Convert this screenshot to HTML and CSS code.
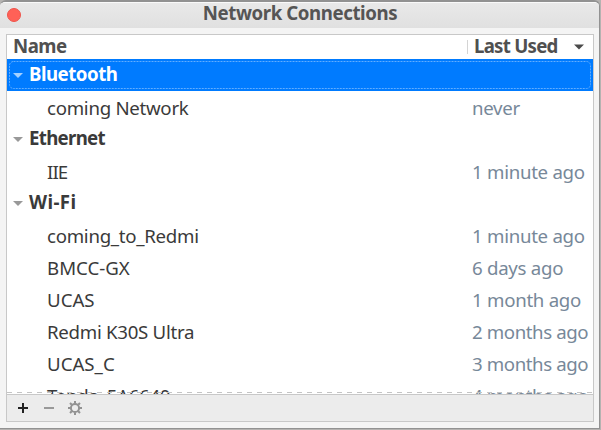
FILE: index.html
```
<!DOCTYPE html>
<html lang="en">
<head>
<meta charset="utf-8">
<title>Network Connections</title>
<link rel="stylesheet" href="styles.css">
</head>
<body>
<main class="window">
  <header class="titlebar"><span class="close"></span><h1>Network Connections</h1></header>
  <section class="panel">
    <div class="head"><span class="name">Name</span><span class="last">Last Used</span><svg class="sort" width="10" height="6" viewBox="0 0 10 6"><path d="M0 0.5H10L5 5.5Z" fill="#4a4a4a"/></svg></div>
    <div class="list">
      <div class="row group selected"><i class="arrow"></i><span>Bluetooth</span><svg class="focus" width="586" height="30"><rect x="2.5" y="2.5" width="581" height="27" rx="4" fill="none" stroke="#61adff" stroke-dasharray="2 1"/></svg></div>
      <div class="row"><span class="name">coming Network</span><span class="time">never</span></div>
      <div class="row group"><i class="arrow"></i><span class="tighter">Ethernet</span></div>
      <div class="row"><span class="name narrow">IIE</span><span class="time">1 minute ago</span></div>
      <div class="row group"><i class="arrow"></i><span class="loose">Wi-Fi</span></div>
      <div class="row"><span class="name">coming_to_Redmi</span><span class="time">1 minute ago</span></div>
      <div class="row"><span class="name caps">BMCC-GX</span><span class="time">6 days ago</span></div>
      <div class="row"><span class="name caps">UCAS</span><span class="time">1 month ago</span></div>
      <div class="row"><span class="name">Redmi K30S Ultra</span><span class="time plural">2 months ago</span></div>
      <div class="row"><span class="name caps">UCAS_C</span><span class="time plural">3 months ago</span></div>
      <div class="row"><span class="name">Tenda_5A6640</span><span class="time plural">4 months ago</span></div>
      <div class="more"></div>
    </div>
    <footer class="tools">
      <svg width="10" height="10" viewBox="0 0 10 10"><path d="M5 0V10M0 5H10" stroke="#222" stroke-width="2"/></svg>
      <svg width="10" height="10" viewBox="0 0 10 10"><path d="M0 5H10" stroke="#999" stroke-width="2"/></svg>
      <svg width="14" height="14" viewBox="-7 -7 14 14"><g fill="none" stroke="#929292"><circle r="4.1" stroke-width="2"/><path d="M0-4.5V-7M0 4.5V7M-4.5 0H-7M4.5 0H7M-3.2-3.2L-5-5M3.2 3.2L5 5M-3.2 3.2L-5 5M3.2-3.2L5-5" stroke-width="2"/></g></svg>
    </footer>
  </section>
</main>
</body>
</html>
```
FILE: styles.css
```
* { box-sizing: border-box; }
body {
  margin: 0;
  background: #b5b3b1;
  font: 18.67px/32px "Noto Sans", sans-serif;
  color: #3a3a3a;
}
.window {
  width: 600px;
  height: 429px;
  border: 1px solid #929292;
  border-width: 2px 1px 1px 0;
  border-radius: 6px 6px 0 0;
  background: #f4f4f4;
  overflow: hidden;
}
.titlebar {
  display: flex;
  align-items: center;
  height: 26px;
  padding-left: 7px;
  border-top: 1px solid #fafafa;
  background: linear-gradient(#e9e9e9, #e0e0e0);
}
.close {
  width: 14px;
  height: 14px;
  margin-bottom: 1px;
  border: 1px solid #ee554c;
  border-radius: 50%;
  background: #ff6157;
}
h1 {
  flex: 1;
  margin: 0 0 5px;
  padding-right: 20px;
  text-align: center;
  font-size: 18.67px;
  line-height: 24px;
  letter-spacing: -0.42px;
  color: #555;
}
.panel {
  width: 588px;
  height: 388px;
  margin: 6px 0 0 6px;
  border: 1px solid #c8c8c8;
  background: #fff;
}
.head {
  display: flex;
  align-items: center;
  height: 24px;
  padding-left: 6px;
  font-weight: 700;
  line-height: 24px;
  letter-spacing: -0.5px;
  color: #505050;
}
.head .name { width: 454px; margin-top: -2px; }
.head .last {
  width: 107px;
  height: 14px;
  padding-left: 6px;
  border-left: 1px solid #d4d4d4;
  line-height: 11px;
  letter-spacing: -0.75px;
  white-space: nowrap;
}
.list {
  position: relative;
  height: 335px;
  overflow: hidden;
}
.row {
  display: flex;
  height: 32px;
  padding: 1px 0 0 40px;
  letter-spacing: -0.28px;
  white-space: nowrap;
}
.row .name { width: 425px; }
.row .caps { letter-spacing: 0; }
.row .narrow { letter-spacing: -0.9px; }
.time { color: #778899; }
.plural { letter-spacing: -0.4px; }
.group {
  align-items: center;
  padding: 0 0 0 6px;
  font-weight: 700;
  letter-spacing: -0.5px;
}
.tighter { letter-spacing: -0.7px; }
.loose { letter-spacing: 0.4px; }
.arrow {
  width: 10px;
  height: 5px;
  margin: 1px 6px 0 0;
  background: #999;
  clip-path: polygon(0 0, 100% 0, 50% 100%);
}
.group span { line-height: 32px; margin-top: -2px; }
.selected {
  position: relative;
  background: #007bff;
  color: #fff;
}
.selected .arrow { background: #a4d0ff; }
.focus { position: absolute; top: 0; left: 0; }
.more {
  position: absolute;
  right: 0;
  bottom: 1px;
  left: 0;
  height: 1px;
  background: repeating-linear-gradient(90deg, #c4c4c4 0 5px, transparent 5px 10px);
}
.tools {
  display: flex;
  align-items: center;
  gap: 16px;
  height: 27px;
  border-top: 1px solid #c8c8c8;
  padding-left: 11px;
  background: #ececec;
}
.tools svg:last-child { margin-left: -2px; }
```
